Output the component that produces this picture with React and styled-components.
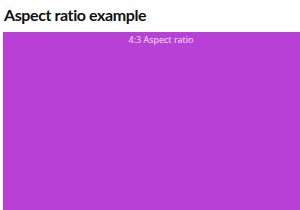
import React from "react";
import styled, { createGlobalStyle } from "styled-components";

const Global = createGlobalStyle`
  html, body { margin: 0; padding: 0; background: #fff; overflow: hidden; }
  body { font-family: "Open Sans", "Noto Sans", sans-serif; }
`;

const Page = styled.div`
  width: 300px;
  height: 210px;
  overflow: hidden;
  box-sizing: border-box;
  padding: 4px 0 0 3px;
`;

const Title = styled.h1`
  margin: 0 0 7px 1px;
  font-family: Lato, "Open Sans", sans-serif;
  font-size: 16px;
  line-height: 21px;
  font-weight: 700;
  letter-spacing: -0.4px;
  color: #111;
`;

const Box = styled.div`
  width: 316px;
  aspect-ratio: 4 / 3;
  background: #b940d6;
  color: #f5e3fa;
  font-size: 9px;
  line-height: 14px;
  padding-top: 1px;
  text-align: center;
`;

export default function App() {
  return (
    <Page>
      <Global />
      <Title>Aspect ratio example</Title>
      <Box>4:3 Aspect ratio</Box>
    </Page>
  );
}
